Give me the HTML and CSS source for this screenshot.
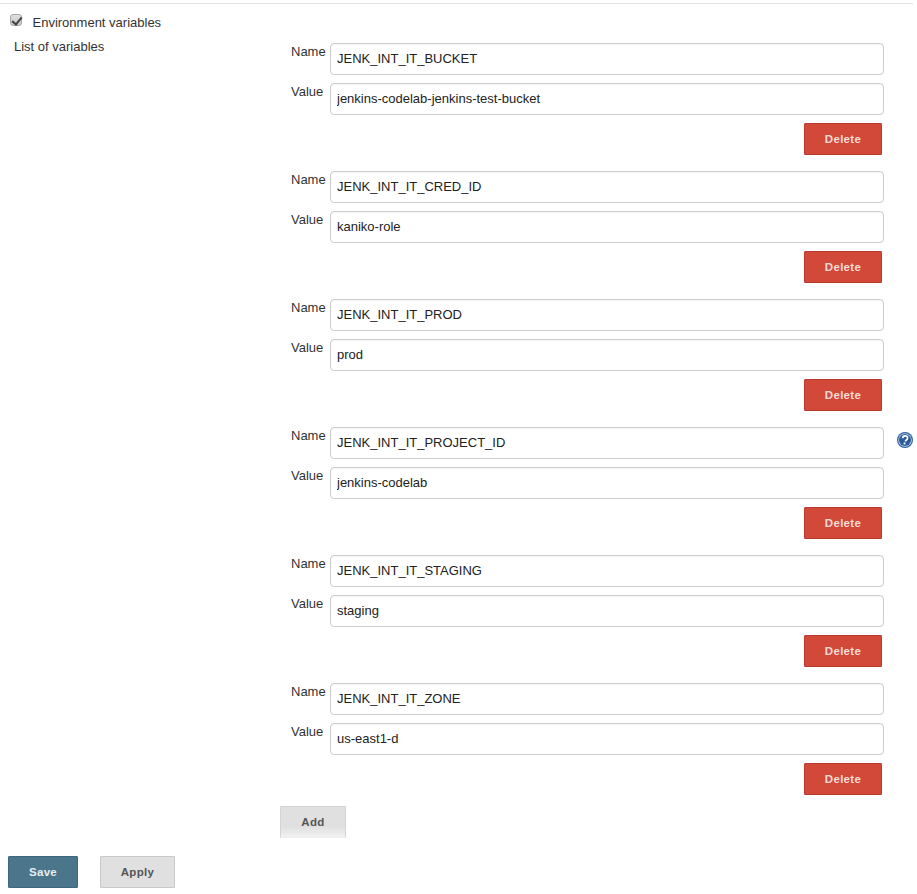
FILE: index.html
```html
<!DOCTYPE html>
<html lang="en">
<head>
<meta charset="utf-8">
<title>Environment variables</title>
<link rel="stylesheet" href="styles.css">
</head>
<body>
<div class="page">
  <hr class="rule">
  <label class="check-row">
    <input class="check" type="checkbox" checked>
    <span>Environment variables</span>
  </label>
  <div class="section">
    <div class="section-label">List of variables</div>
    <div class="entries">
      <div class="entry">
        <div class="field"><span class="field-label">Name</span><input class="text" value="JENK_INT_IT_BUCKET"></div>
        <div class="field"><span class="field-label">Value</span><input class="text" value="jenkins-codelab-jenkins-test-bucket"></div>
        <div class="actions"><button class="btn btn-delete">Delete</button></div>
      </div>
      <div class="entry">
        <div class="field"><span class="field-label">Name</span><input class="text" value="JENK_INT_IT_CRED_ID"></div>
        <div class="field"><span class="field-label">Value</span><input class="text" value="kaniko-role"></div>
        <div class="actions"><button class="btn btn-delete">Delete</button></div>
      </div>
      <div class="entry">
        <div class="field"><span class="field-label">Name</span><input class="text" value="JENK_INT_IT_PROD"></div>
        <div class="field"><span class="field-label">Value</span><input class="text" value="prod"></div>
        <div class="actions"><button class="btn btn-delete">Delete</button></div>
      </div>
      <div class="entry">
        <div class="field">
          <span class="field-label">Name</span><input class="text" value="JENK_INT_IT_PROJECT_ID">
          <svg class="help" viewBox="0 0 16 16" width="16" height="16" aria-hidden="true">
            <circle cx="8" cy="8" r="8" fill="#2f60a2"/>
            <circle cx="8" cy="8" r="6.8" fill="#c9d8ea"/>
            <circle cx="8" cy="8" r="6" fill="#2a5a9c"/>
            <path d="M5.6 6.3C5.7 4.7 6.8 3.9 8.1 3.9c1.5 0 2.5.9 2.5 2.1 0 1-.6 1.5-1.3 2-.5.3-.8.7-.8 1.4" fill="none" stroke="#fff" stroke-width="1.7"/>
            <rect x="6.6" y="10.5" width="1.9" height="1.9" fill="#fff"/>
          </svg>
        </div>
        <div class="field"><span class="field-label">Value</span><input class="text" value="jenkins-codelab"></div>
        <div class="actions"><button class="btn btn-delete">Delete</button></div>
      </div>
      <div class="entry">
        <div class="field"><span class="field-label">Name</span><input class="text" value="JENK_INT_IT_STAGING"></div>
        <div class="field"><span class="field-label">Value</span><input class="text" value="staging"></div>
        <div class="actions"><button class="btn btn-delete">Delete</button></div>
      </div>
      <div class="entry">
        <div class="field"><span class="field-label">Name</span><input class="text" value="JENK_INT_IT_ZONE"></div>
        <div class="field"><span class="field-label">Value</span><input class="text" value="us-east1-d"></div>
        <div class="actions"><button class="btn btn-delete">Delete</button></div>
      </div>
      <button class="btn btn-add">Add</button>
    </div>
  </div>
  <div class="footer">
    <button class="btn btn-save">Save</button>
    <button class="btn btn-apply">Apply</button>
  </div>
</div>
</body>
</html>
```
FILE: styles.css
```css
* { box-sizing: border-box; }
html, body { margin: 0; padding: 0; background: #fff; }
body {
  font-family: "Liberation Sans", Arial, sans-serif;
  font-size: 13px;
  color: #333;
}
.page { padding-top: 3px; height: 894px; overflow: hidden; }
.rule { margin: 0; width: 913px; height: 1px; border: 0; background: #e2e2e2; }
.check-row { display: flex; align-items: flex-start; height: 22px; margin-top: 10px; padding-left: 10px; line-height: 17px; }
.check {
  appearance: none; position: relative; width: 12px; height: 12px; margin: 0 10.5px 0 0;
  border: 1px solid #a8a8a8; border-radius: 3px;
  background: linear-gradient(#dedede, #c8c8c8);
}
.check::after {
  content: ""; position: absolute; left: 3px; top: 0; width: 4px; height: 8px;
  border: solid #444; border-width: 0 2px 2px 0; transform: rotate(40deg);
}
.section { display: flex; }
.section-label { width: 280px; padding: 2px 0 0 14px; line-height: 17px; }
.entries { width: 637px; padding-top: 7px; display: flex; flex-direction: column; }
.entry { display: flex; flex-direction: column; gap: 8px; padding-bottom: 16px; }
.field { display: flex; position: relative; }
.field-label { width: 50px; padding: 0 0 0 11px; line-height: 17px; }
.text {
  width: 554px; height: 32px; padding: 0 6px 2px;
  border: 1px solid #ccc; border-radius: 4px;
  font: 13px "Liberation Sans", Arial, sans-serif; color: #222;
  box-shadow: inset 0 1px 1px rgba(0,0,0,.04);
  outline: 0; background: #fff;
}
.help { position: absolute; left: 617px; top: 5px; }
.actions { display: flex; padding-left: 524px; }
.btn {
  display: block; height: 32px; padding: 0;
  font: bold 11.5px "Liberation Sans", Arial, sans-serif;
  letter-spacing: .3px;
  border-radius: 1px; border: 1px solid;
}
.btn-delete { width: 78px; background: #d24939; border-color: #b73a2c; color: #f4dcd8; }
.btn-add {
  width: 66px; margin-top: -5px; color: #555; border-color: #d4d4d4;
  border-bottom-color: #eee;
  background: linear-gradient(#e0e0e0 0, #e0e0e0 65%, #f1f1f1 100%);
}
.footer { display: flex; gap: 22px; padding-left: 8px; margin-top: 18px; }
.btn-save { width: 70px; background: #4b758b; border-color: #3f6880; color: #e6edf1; }
.btn-apply { width: 75px; background: #e0e0e0; border-color: #c9c9c9; color: #555; }
```
